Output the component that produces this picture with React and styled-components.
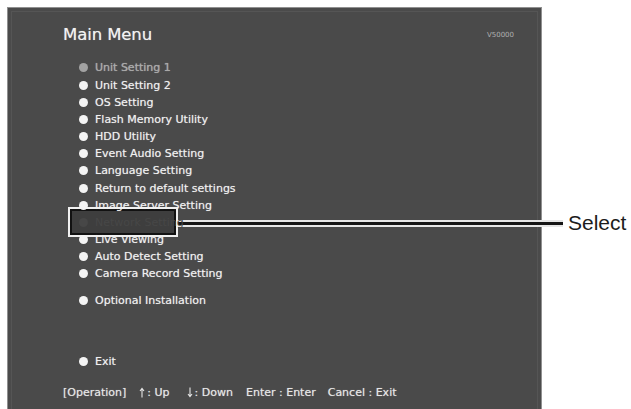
import React from "react";
import styled, { createGlobalStyle } from "styled-components";

const Global = createGlobalStyle`
  html, body { margin: 0; padding: 0; background: #ffffff; }
  body { font-family: "DejaVu Sans", "Liberation Sans", sans-serif; }
`;

const Page = styled.div`
  position: relative;
  width: 631px;
  height: 409px;
  overflow: hidden;
  padding: 7px 0 0 7px;
  box-sizing: border-box;
`;

const Screen = styled.div`
  width: 535px;
  height: 410px;
  box-sizing: border-box;
  background: #4a4a4a;
  border: 1px solid #909090;
  box-shadow: inset 0 0 0 3px #4b4b4b, inset 0 0 0 4px #555555;
  padding: 18px 27px 0 55px;
  display: flex;
  flex-direction: column;
  color: #eeeeee;
  text-shadow: 0 0 0.8px rgba(255, 255, 255, 0.55);
`;

const Header = styled.div`
  display: flex;
  align-items: center;
  justify-content: space-between;
  height: 18px;
`;

const Title = styled.div`
  font-family: "DejaVu Sans", sans-serif;
  font-size: 16.5px;
  line-height: 18px;
  color: #f2f2f2;
  letter-spacing: -0.1px;
`;

const Version = styled.div`
  font-size: 7px;
  line-height: 8px;
  color: #b0b0b0;
  text-shadow: none;
`;

const Menu = styled.div`
  display: flex;
  flex-direction: column;
  margin-top: 15.4px;
  padding-left: 15.5px;
`;

const Group = styled.div`
  display: flex;
  flex-direction: column;
  margin-top: ${(p) => p.$gap || 0}px;
`;

const Row = styled.div`
  position: relative;
  display: flex;
  align-items: center;
  gap: 7.5px;
  height: 17.17px;
  font-size: 11px;
  color: ${(p) => (p.$disabled ? "#a9a9a9" : "#f0f0f0")};

  ${(p) =>
    p.$selected &&
    `
    color: #474747;
    text-shadow: none;
    &::before {
      content: "";
      position: absolute;
      left: -10.5px;
      top: 50%;
      width: 110px;
      height: 30px;
      transform: translateY(-50%);
      box-sizing: border-box;
      border: 2px solid #f0f0f0;
      box-shadow: inset 0 0 0 2px #121212;
      background: #3e3e3e;
      z-index: 1;
    }
  `}
`;

const Bullet = styled.span`
  position: relative;
  z-index: 2;
  width: 9px;
  height: 9px;
  border-radius: 50%;
  flex: none;
  background: ${(p) =>
    p.$selected ? "#474747" : p.$disabled ? "#a2a2a2" : "#f4f4f4"};
`;

const Label = styled.span`
  position: relative;
  z-index: 2;
  white-space: nowrap;
`;

const Footer = styled.div`
  display: flex;
  align-items: center;
  margin-top: 15px;
  height: 14px;
  font-size: 11px;
  color: #e6e6e6;
  white-space: nowrap;
`;

const Hint = styled.span`
  display: inline-flex;
  align-items: center;
  margin-left: ${(p) => p.$offset}px;
`;

const Arrow = styled.svg`
  width: 6px;
  height: 11px;
  margin-right: 2px;
`;

const Callout = styled.div`
  position: absolute;
  left: 178px;
  top: 210px;
  height: 26px;
  display: flex;
  align-items: center;
`;

const Leader = styled.div`
  width: 385px;
  height: 3px;
  background: #151515;
  box-shadow: 0 -2px 0 #e6e6e6, 0 2px 0 #e6e6e6;
`;

const CalloutText = styled.span`
  margin-left: 5px;
  font-family: "Liberation Sans", Arial, sans-serif;
  font-size: 21px;
  line-height: 26px;
  color: #1c1c1c;
`;

const UpArrow = () => (
  <Arrow viewBox="0 0 6 11">
    <path d="M3 1.5V10.5M1 4L3 1.5L5 4" stroke="#e6e6e6" strokeWidth="1.1" fill="none" />
  </Arrow>
);

const DownArrow = () => (
  <Arrow viewBox="0 0 6 11">
    <path d="M3 0.5V9.5M1 7L3 9.5L5 7" stroke="#e6e6e6" strokeWidth="1.1" fill="none" />
  </Arrow>
);

const groups = [
  {
    gap: 0,
    items: [
      { label: "Unit Setting 1", disabled: true },
      { label: "Unit Setting 2" },
      { label: "OS Setting" },
      { label: "Flash Memory Utility" },
      { label: "HDD Utility" },
      { label: "Event Audio Setting" },
      { label: "Language Setting" },
      { label: "Return to default settings" },
      { label: "Image Server Setting" },
      { label: "Network Setting", selected: true },
      { label: "Live Viewing" },
      { label: "Auto Detect Setting" },
      { label: "Camera Record Setting" },
    ],
  },
  { gap: 9.8, items: [{ label: "Optional Installation" }] },
  { gap: 43.8, items: [{ label: "Exit" }] },
];

export default function App() {
  return (
    <>
      <Global />
      <Page>
        <Screen>
          <Header>
            <Title>Main Menu</Title>
            <Version>V50000</Version>
          </Header>
          <Menu>
            {groups.map((g, gi) => (
              <Group key={gi} $gap={g.gap}>
                {g.items.map((it) => (
                  <Row key={it.label} $disabled={it.disabled} $selected={it.selected}>
                    <Bullet $disabled={it.disabled} $selected={it.selected} />
                    <Label>{it.label}</Label>
                  </Row>
                ))}
              </Group>
            ))}
          </Menu>
          <Footer>
            <span>[Operation]</span>
            <Hint $offset={13}>
              <UpArrow />: Up
            </Hint>
            <Hint $offset={17}>
              <DownArrow />: Down
            </Hint>
            <Hint $offset={13}>Enter : Enter</Hint>
            <Hint $offset={12}>Cancel : Exit</Hint>
          </Footer>
        </Screen>
        <Callout>
          <Leader />
          <CalloutText>Select</CalloutText>
        </Callout>
      </Page>
    </>
  );
}
